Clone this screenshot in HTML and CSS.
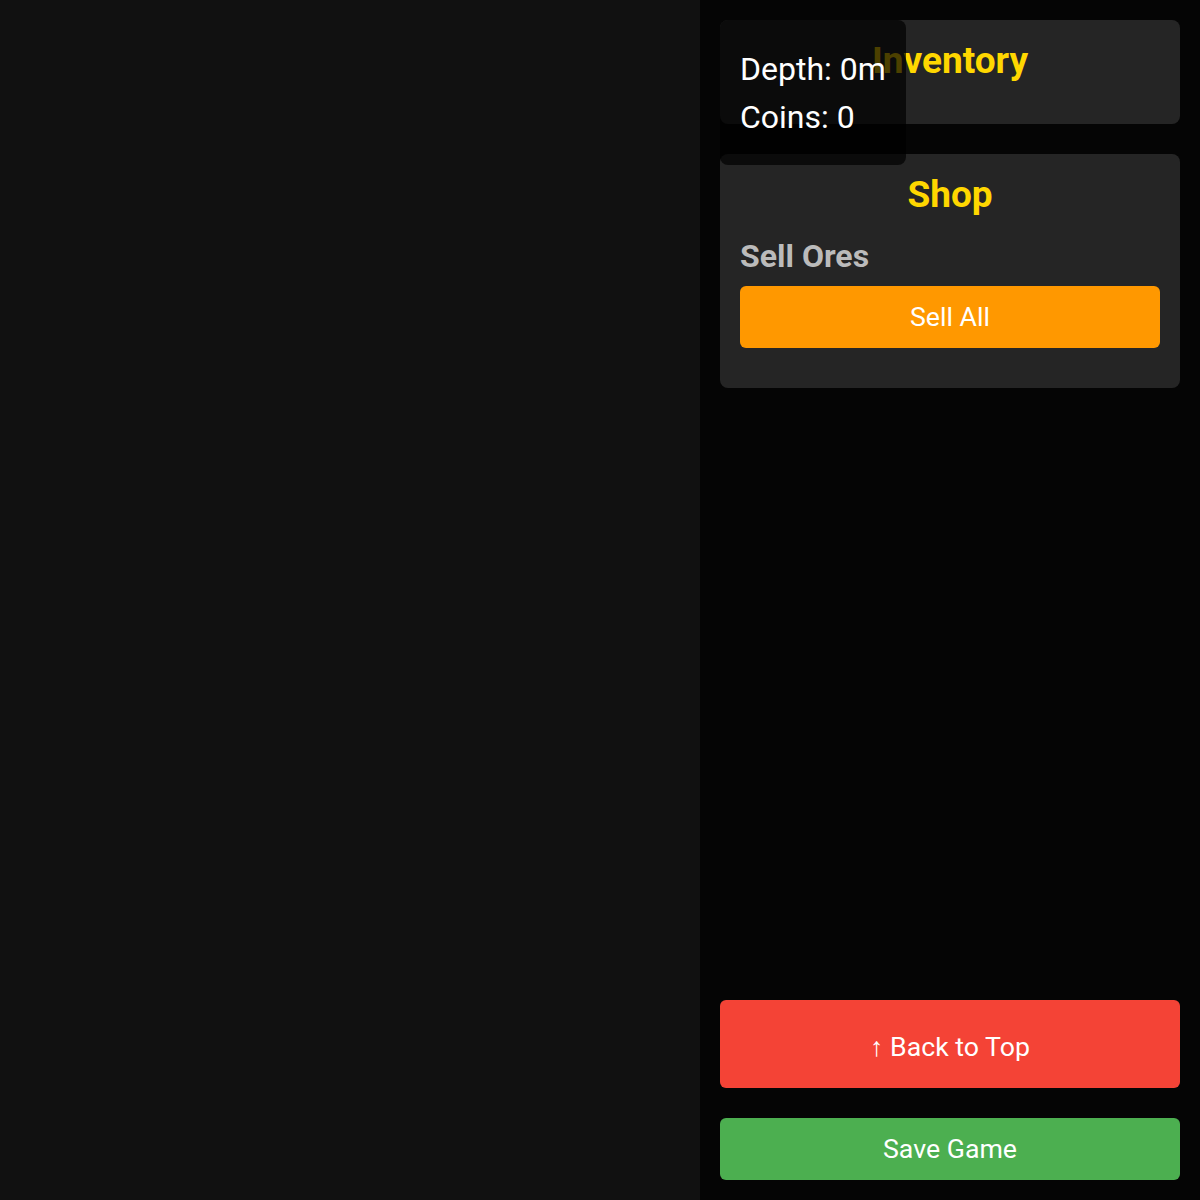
FILE: index.html
```html
<!DOCTYPE html>
<html lang="en">
<head>
    <meta charset="UTF-8">
    <meta name="viewport" content="width=device-width, initial-scale=1.0">
    <title>Mining Game</title>
    <link rel="stylesheet" href="styles.css">
</head>
<body>
    <div class="game">
        <!-- Mine view -->
        <div id="mine" class="mine"></div>

        <!-- Side panel -->
        <div class="sidebar">
            <div class="stats">
                <div id="depth">Depth: 0m</div>
                <div id="coins">Coins: 0</div>
            </div>

            <div class="panel inventory">
                <h2>Inventory</h2>
                <div id="inventoryList" class="inventory-list"></div>
            </div>

            <div class="panel shop">
                <h2>Shop</h2>
                <h3>Sell Ores</h3>
                <button class="btn btn-sell">Sell All</button>
            </div>

            <div class="spacer"></div>

            <button class="btn btn-top">↑ Back to Top</button>
            <button class="btn btn-save">Save Game</button>
        </div>
    </div>
</body>
</html>
```

FILE: styles.css
```css
body {
    margin: 0;
    font-family: 'Roboto', 'Liberation Sans', sans-serif;
    background-color: #111;
    color: #fff;
}

.game {
    display: flex;
    height: 100vh;
}

.mine {
    flex: 1;
    background-color: #111;
}

.sidebar {
    position: relative;
    width: 460px;
    padding: 20px;
    background-color: #050505;
    display: flex;
    flex-direction: column;
}

.stats {
    position: absolute;
    top: 20px;
    left: 20px;
    padding: 25px 20px 24px;
    background-color: rgba(0, 0, 0, 0.7);
    border-radius: 8px;
    font-size: 32px;
    line-height: 48px;
    white-space: nowrap;
    z-index: 2;
}

.panel {
    background-color: #252525;
    border-radius: 8px;
    padding: 20px;
    margin-bottom: 30px;
}

.panel h2 {
    margin: 0 0 22px;
    text-align: center;
    color: #ffd700;
    font-size: 37px;
    line-height: 42px;
}

.panel h3 {
    margin: 0 0 12px;
    color: #bbb;
    font-size: 32px;
    line-height: 36px;
}

.btn {
    display: block;
    width: 100%;
    border: none;
    border-radius: 6px;
    color: #fff;
    font-family: inherit;
    font-size: 26.7px;
    cursor: pointer;
}

.btn-sell {
    height: 62px;
    margin-bottom: 20px;
    background-color: #ff9800;
}

.spacer {
    flex: 1;
}

.btn-top {
    height: 88px;
    padding-top: 6px;
    margin-bottom: 30px;
    background-color: #f44336;
}

.btn-save {
    height: 62px;
    background-color: #4caf50;
}
```
